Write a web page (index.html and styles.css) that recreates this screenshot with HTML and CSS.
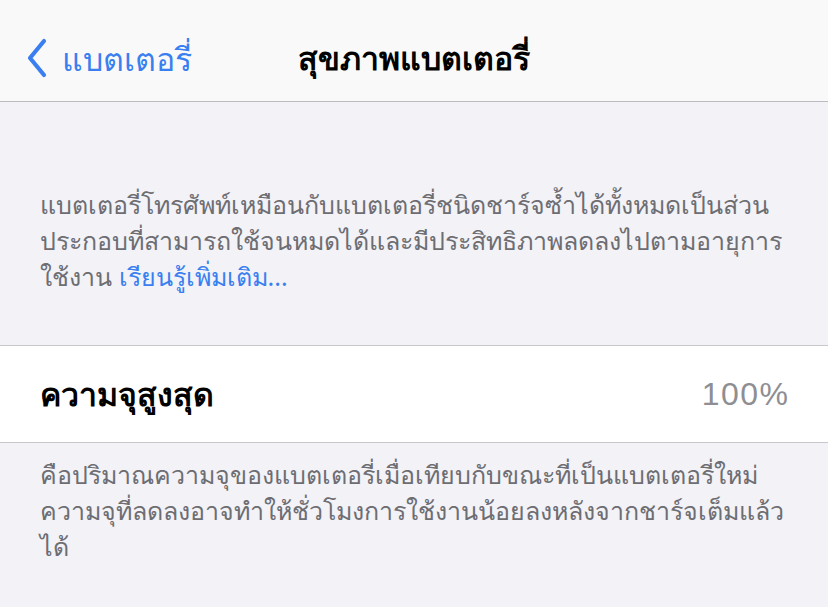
FILE: index.html
```html
<!DOCTYPE html>
<html lang="th">
<head>
<meta charset="utf-8">
<link rel="stylesheet" href="styles.css">
</head>
<body>
<header class="nav">
  <a class="back">
    <svg class="chev" width="22" height="40" viewBox="0 0 22 40"><path d="M18 3 L4 20 L18 37" fill="none" stroke="#3a7ff0" stroke-width="4.2" stroke-linecap="round" stroke-linejoin="round"/></svg>
    <span class="back-text">แบตเตอรี่</span>
  </a>
  <h1 class="title">สุขภาพแบตเตอรี่</h1>
</header>
<main class="content">
  <p class="note top">แบตเตอรี่โทรศัพท์เหมือนกับแบตเตอรี่ชนิดชาร์จซ้ำได้ทั้งหมดเป็นส่วน<br>ประกอบที่สามารถใช้จนหมดได้และมีประสิทธิภาพลดลงไปตามอายุการ<br>ใช้งาน <span class="link">เรียนรู้เพิ่มเติม...</span></p>
  <section class="group">
    <div class="row">
      <span class="label">ความจุสูงสุด</span>
      <span class="value">100%</span>
    </div>
  </section>
  <p class="note bottom">คือปริมาณความจุของแบตเตอรี่เมื่อเทียบกับขณะที่เป็นแบตเตอรี่ใหม่<br>ความจุที่ลดลงอาจทำให้ชั่วโมงการใช้งานน้อยลงหลังจากชาร์จเต็มแล้ว<br>ได้</p>
</main>
</body>
</html>
```
FILE: styles.css
```css
html, body { margin: 0; padding: 0; }
body {
  width: 828px;
  height: 607px;
  overflow: hidden;
  background: #f2f2f7;
  font-family: "Noto Sans", "DejaVu Sans", sans-serif;
}
.nav {
  height: 102px;
  background: #f9f9f9;
  border-bottom: 1px solid #bcbcc0;
  position: relative;
  display: flex;
  align-items: center;
  justify-content: center;
  box-sizing: border-box;
}
.back {
  position: absolute;
  left: 26px;
  top: 37px;
  display: flex;
  align-items: center;
  gap: 14px;
  color: #3a7ff0;
}
.chev { display: block; }
.back-text { font-size: 32px; line-height: 40px; padding-top: 2px; }
.title {
  margin: 0;
  font-size: 32px;
  font-weight: 700;
  color: #000;
  line-height: 40px;
  padding-top: 14px;
}
.note {
  margin: 0;
  padding: 0 40px;
  font-size: 25px;
  line-height: 36px;
  color: #6d6d72;
}
.note.top { padding-top: 84px; padding-bottom: 51px; }
.link { color: #3a7ff0; }
.group {
  background: #fff;
  border-top: 1px solid #c8c7cc;
  border-bottom: 1px solid #c8c7cc;
}
.row {
  height: 96px;
  display: flex;
  align-items: center;
  justify-content: space-between;
  padding: 0 40px;
}
.label { font-size: 32px; font-weight: 700; color: #000; }
.value {
  font-size: 32px;
  color: #8e8e93;
  font-family: "Liberation Sans", Arial, sans-serif;
  letter-spacing: 1.5px;
  margin-right: -1.5px;
}
.note.bottom { padding-top: 13px; }
```
